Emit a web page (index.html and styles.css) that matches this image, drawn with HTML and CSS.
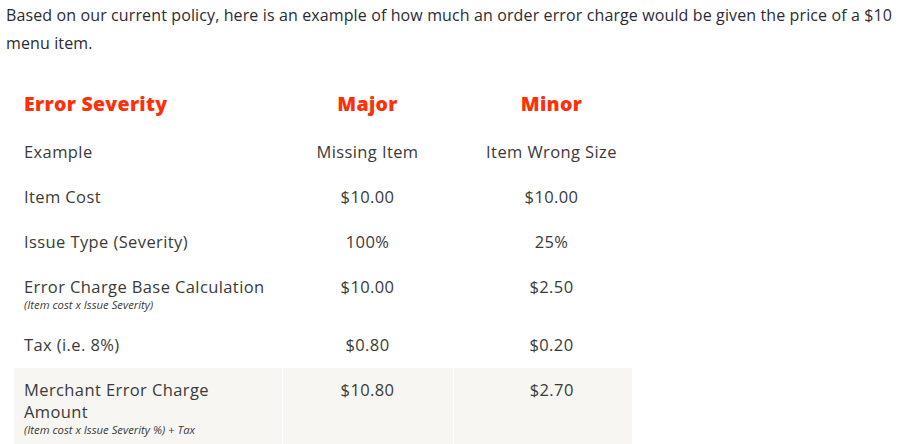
FILE: index.html
```html
<!DOCTYPE html>
<html>
<head>
<meta charset="utf-8">
<link rel="stylesheet" href="styles.css">
</head>
<body>
<p class="intro">Based on our current policy, here is an example of how much an order error charge would be given the price of a $10 menu item.</p>
<table class="fees">
  <colgroup>
    <col class="c1"><col class="c2"><col class="c3">
  </colgroup>
  <thead>
    <tr>
      <th class="label">Error Severity</th>
      <th>Major</th>
      <th class="minor">Minor</th>
    </tr>
  </thead>
  <tbody>
    <tr>
      <td class="label">Example</td>
      <td>Missing Item</td>
      <td class="minor">Item Wrong Size</td>
    </tr>
    <tr>
      <td class="label">Item Cost</td>
      <td>$10.00</td>
      <td class="minor">$10.00</td>
    </tr>
    <tr>
      <td class="label">Issue Type (Severity)</td>
      <td>100%</td>
      <td class="minor">25%</td>
    </tr>
    <tr class="calc">
      <td class="label">Error Charge Base Calculation<span class="note">(Item cost x Issue Severity)</span></td>
      <td>$10.00</td>
      <td class="minor">$2.50</td>
    </tr>
    <tr>
      <td class="label">Tax (i.e. 8%)</td>
      <td>$0.80</td>
      <td class="minor">$0.20</td>
    </tr>
    <tr class="total">
      <td class="label">Merchant Error Charge<br>Amount<span class="note">(Item cost x Issue Severity %) + Tax</span></td>
      <td>$10.80</td>
      <td class="minor">$2.70</td>
    </tr>
  </tbody>
</table>
</body>
</html>
```
FILE: styles.css
```css
html, body {
  margin: 0;
  padding: 0;
  background: #ffffff;
}
body {
  padding: 0 0 0 6px;
}
.intro {
  margin: 0;
  padding-top: 1px;
  font-family: "Open Sans", "Liberation Sans", sans-serif;
  font-size: 16px;
  letter-spacing: 0.12px;
  line-height: 28px;
  color: #2b2b33;
}
.fees {
  margin: 27px 0 0 8px;
  border-collapse: collapse;
  table-layout: fixed;
  width: 618px;
  font-family: "Open Sans", "Liberation Sans", sans-serif;
  color: #3a3a3a;
  font-size: 16.5px;
  letter-spacing: 0.4px;
}
.c1 { width: 268px; }
.c2 { width: 171px; }
.c3 { width: 179px; }
.fees th, .fees td {
  text-align: center;
  vertical-align: top;
  padding: 11px 0 12px;
  line-height: 22px;
}
.fees th {
  color: #ff3008;
  font-weight: 800;
  font-size: 19.5px;
  letter-spacing: 0.3px;
  padding: 9px 0 15px;
}
.fees .label {
  text-align: left;
  padding-left: 10px;
}
.fees .minor {
  padding-left: 18px;
}
.note {
  display: block;
  font-size: 11.3px;
  font-style: italic;
  letter-spacing: 0;
  line-height: 13px;
  margin-top: 0;
}
.calc td {
  padding-bottom: 12px;
}
.total td {
  background: #f7f6f3;
  padding-bottom: 20px;
}
.total td + td {
  border-left: 1px solid #ffffff;
}
```
